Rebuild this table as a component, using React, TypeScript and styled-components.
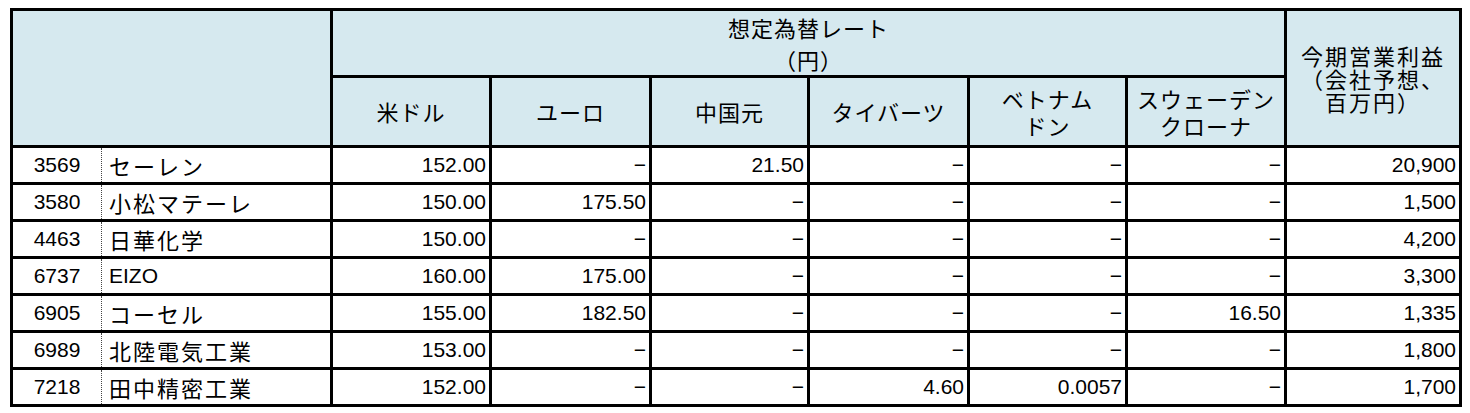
import styled, { createGlobalStyle } from "styled-components";

const GlobalStyle = createGlobalStyle`
  body {
    margin: 0;
    padding: 8px 0 0 10px;
    background: #ffffff;
    font-family: "Liberation Sans", "Noto Sans CJK JP", sans-serif;
    color: #000;
  }
`;

interface IRow {
  code: string;
  name: string;
  latin?: boolean;
  rates: string[];
  profit: string;
}

const currencies = [
  ["米ドル"],
  ["ユーロ"],
  ["中国元"],
  ["タイバーツ"],
  ["ベトナム", "ドン"],
  ["スウェーデン", "クローナ"],
];

const rows: IRow[] = [
  { code: "3569", name: "セーレン", rates: ["152.00", "", "21.50", "", "", ""], profit: "20,900" },
  { code: "3580", name: "小松マテーレ", rates: ["150.00", "175.50", "", "", "", ""], profit: "1,500" },
  { code: "4463", name: "日華化学", rates: ["150.00", "", "", "", "", ""], profit: "4,200" },
  { code: "6737", name: "EIZO", latin: true, rates: ["160.00", "175.00", "", "", "", ""], profit: "3,300" },
  { code: "6905", name: "コーセル", rates: ["155.00", "182.50", "", "", "", "16.50"], profit: "1,335" },
  { code: "6989", name: "北陸電気工業", rates: ["153.00", "", "", "", "", ""], profit: "1,800" },
  { code: "7218", name: "田中精密工業", rates: ["152.00", "", "", "4.60", "0.0057", ""], profit: "1,700" },
];

const colWidths = [90, 230, 159, 160, 158, 160, 158, 159, 175];

const App = () => {
  return (
    <>
      <GlobalStyle />
      <Table>
        <colgroup>
          {colWidths.map((w, i) => (
            <col key={i} style={{ width: w }} />
          ))}
        </colgroup>
        <thead>
          <tr>
            <HeadCell colSpan={2} rowSpan={2} />
            <HeadCell colSpan={6} $top>
              <HeadLine $lh={32}>想定為替レート</HeadLine>
              <HeadLine $lh={32}>（円）</HeadLine>
            </HeadCell>
            <HeadCell rowSpan={2} $wide>
              <HeadLine $lh={23}>今期営業利益</HeadLine>
              <HeadLine $lh={23}>（会社予想、</HeadLine>
              <HeadLine $lh={23}>百万円）</HeadLine>
            </HeadCell>
          </tr>
          <tr>
            {currencies.map((lines) => (
              <HeadCell key={lines.join("")} $sub>
                {lines.map((l) => (
                  <HeadLine key={l} $lh={27}>
                    {l}
                  </HeadLine>
                ))}
              </HeadCell>
            ))}
          </tr>
        </thead>
        <tbody>
          {rows.map((row) => (
            <tr key={row.code}>
              <CodeCell>{row.code}</CodeCell>
              <NameCell $latin={row.latin}>{row.name}</NameCell>
              {row.rates.map((r, i) => (
                <NumCell key={i}>{r || "−"}</NumCell>
              ))}
              <NumCell>{row.profit}</NumCell>
            </tr>
          ))}
        </tbody>
      </Table>
    </>
  );
};
export default App;

const Table = styled.table`
  border-collapse: collapse;
  table-layout: fixed;
  width: 1452px;
  font-size: 21px;
`;

const HeadCell = styled.th<{ $top?: boolean; $sub?: boolean; $wide?: boolean }>`
  background-color: #d6e9ef;
  border: 3px solid #000;
  font-family: "Noto Sans CJK JP", "Liberation Sans", sans-serif;
  font-weight: 400;
  font-size: 22px;
  letter-spacing: ${({ $wide }) => ($wide ? "2px" : "1px")};
  text-align: center;
  vertical-align: middle;
  padding: 0;
  height: ${({ $top, $sub }) => ($top ? "61px" : $sub ? "67px" : "auto")};
`;

const HeadLine = styled.div<{ $lh: number }>`
  line-height: ${({ $lh }) => $lh}px;
  white-space: nowrap;
`;

const BodyCell = styled.td`
  border: 3px solid #000;
  height: 34px;
  padding: 0;
  vertical-align: middle;
  white-space: nowrap;
`;

const CodeCell = styled(BodyCell)`
  text-align: center;
  border-right: 1px dotted #444;
`;

const NameCell = styled(BodyCell)<{ $latin?: boolean }>`
  border-left: 1px dotted #444;
  padding-left: 7px;
  font-family: ${({ $latin }) =>
    $latin
      ? `"Liberation Sans", sans-serif`
      : `"Noto Sans CJK JP", "Liberation Sans", sans-serif`};
  font-size: ${({ $latin }) => ($latin ? "21px" : "22px")};
  letter-spacing: ${({ $latin }) => ($latin ? "0" : "2px")};
`;

const NumCell = styled(BodyCell)`
  text-align: right;
  padding-right: 3px;
`;
